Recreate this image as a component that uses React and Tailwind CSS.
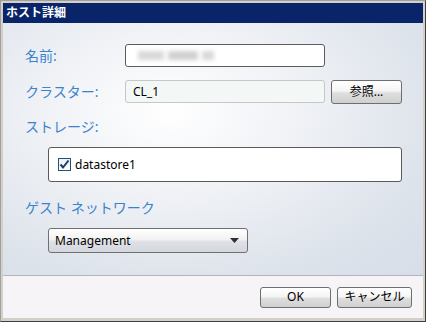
import React from 'react';

const font = { fontFamily: '"Noto Sans", "Noto Sans CJK JP", sans-serif' };

const Label = ({ children, className = '' }) => (
  <div className={`text-[14px] leading-none text-[#3b82cc] ${className}`}>{children}</div>
);

const btnBg = 'bg-[linear-gradient(#ffffff_0%,#f5f5f5_45%,#dedede_55%,#d0d0d0_100%)]';

export default function App() {
  return (
    <div
      className="w-[426px] h-[322px] bg-[#d4d0c8] border border-[#a0a0a0] border-b-[#404040] border-r-[#404040] flex flex-col p-[2px] pb-[3px]"
      style={font}
    >
      {/* Title bar */}
      <div className="h-[20px] bg-[#0a246a] flex items-center pl-[3px] text-white text-[12px] font-bold leading-none">
        ホスト詳細
      </div>

      {/* Body */}
      <div className="flex-1 flex flex-col bg-[radial-gradient(ellipse_at_40%_35%,#ffffff_0%,#f0f2f6_35%,#dde3eb_75%,#d8dee8_100%)] border-b border-[#b0b4bc]">
        {/* Name */}
        <div className="flex items-center mt-[21px] h-[23px]">
          <Label className="w-[122px] pl-[22px]">名前:</Label>
          <div className="w-[200px] h-[23px] bg-white border border-[#5c5c5c] rounded-[3px] flex items-center pl-[12px] gap-[4px]">
            <div className="w-[26px] h-[9px] bg-[#d8d8d8] blur-[2px]" />
            <div className="w-[30px] h-[9px] bg-[#d0d0d0] blur-[2px]" />
            <div className="w-[12px] h-[9px] bg-[#d8d8d8] blur-[2px]" />
          </div>
        </div>

        {/* Cluster */}
        <div className="flex items-center mt-[13px] h-[23px]">
          <Label className="w-[122px] pl-[22px]">クラスター:</Label>
          <div className="w-[200px] h-[23px] bg-[#f3f8f7] border border-[#c4c8c8] rounded-[3px] flex items-center pl-[7px] text-[12px] text-black">
            CL_1
          </div>
          <button className={`ml-[6px] w-[71px] h-[24px] rounded-[3px] border border-[#6e6e6e] ${btnBg} text-[12px] text-black leading-none flex items-center justify-center`}>
            参照...
          </button>
        </div>

        {/* Storage */}
        <Label className="pl-[22px] mt-[17px]">ストレージ:</Label>
        <div className="ml-[45px] mt-[13px] w-[354px] h-[35px] bg-white border border-[#5a5a5a] rounded-[3px] flex items-center pl-[9px]">
          <div className="w-[13px] h-[13px] border border-[#1c5180] bg-[linear-gradient(#f0f0f0,#ffffff)] flex items-center justify-center">
            <svg width="11" height="11" viewBox="0 0 11 11">
              <path d="M1.5 5.5 L4 8.5 L9.5 1.5" stroke="#1a3b6a" strokeWidth="2" fill="none" />
            </svg>
          </div>
          <span className="ml-[4px] text-[12px] text-black">datastore1</span>
        </div>

        {/* Guest network */}
        <Label className="pl-[22px] mt-[19px]">ゲスト ネットワーク</Label>
        <div className="ml-[45px] mt-[13px] w-[200px] h-[25px] rounded-[3px] border border-[#707070] bg-[linear-gradient(#ffffff_0%,#f2f2f2_45%,#dfe1e6_55%,#d4d7de_100%)] flex items-center pl-[6px] pr-[8px] text-[12px] text-black">
          <span className="flex-1">Management</span>
          <svg width="9" height="5" viewBox="0 0 9 5">
            <path d="M0 0 H9 L4.5 5 Z" fill="#303030" />
          </svg>
        </div>
      </div>

      {/* Footer */}
      <div className="h-[42px] bg-[#f6f4f6] flex items-center justify-end pr-[11px] gap-[6px]">
        <button className={`w-[71px] h-[21px] rounded-[3px] border border-[#6e6e6e] ${btnBg} text-[12px] text-black leading-none`}>
          OK
        </button>
        <button className={`w-[75px] h-[21px] rounded-[3px] border border-[#6e6e6e] ${btnBg} text-[12px] text-black leading-none`}>
          キャンセル
        </button>
      </div>
    </div>
  );
}
